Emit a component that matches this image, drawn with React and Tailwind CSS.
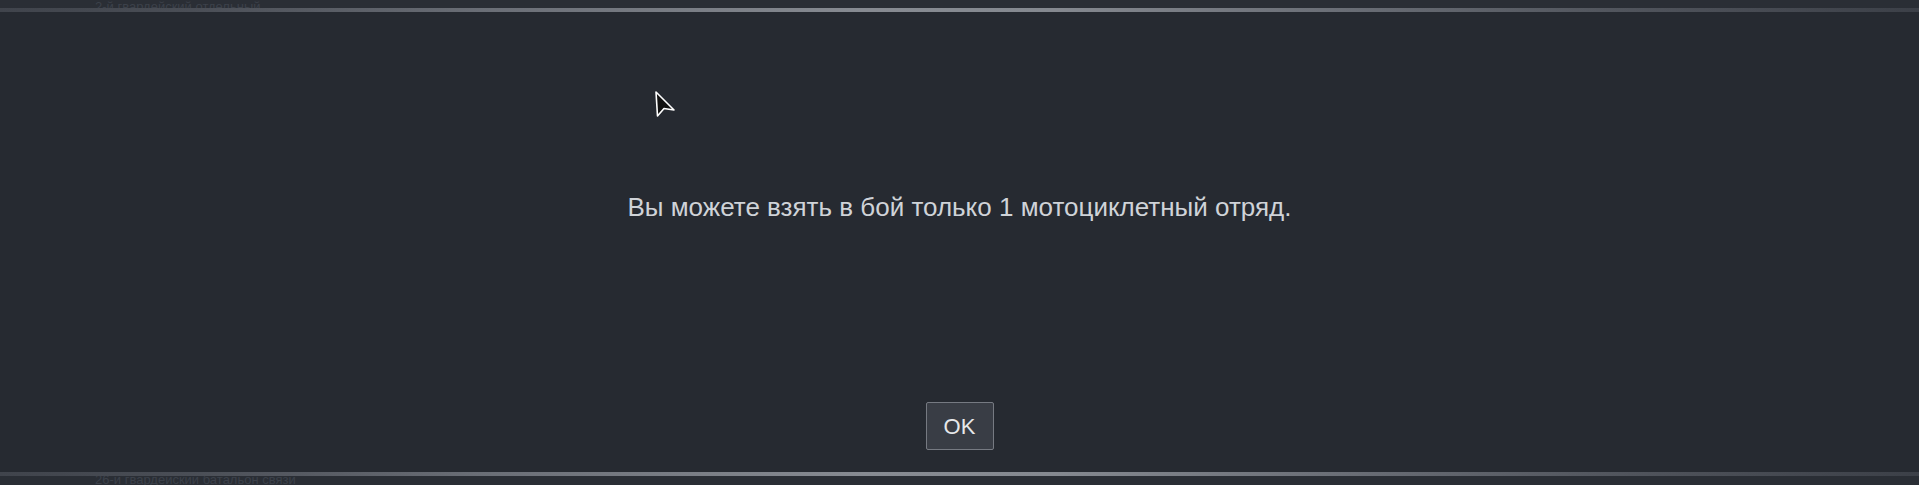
export default function App() {
  return (
    <div className="relative flex h-[485px] w-full flex-col overflow-hidden bg-[#262a31] font-['Liberation_Sans',sans-serif]">
      {/* полоса сверху с остатками списка */}
      <div className="flex h-[8px] items-end overflow-hidden bg-[#2a2e35] pl-[95px] text-[13px] leading-none text-[#3c414a]">
        <span className="translate-y-[5px]">2-й гвардейский отдельный</span>
      </div>
      <div className="h-[4px] bg-[linear-gradient(90deg,#40444c_0%,#4a4e56_10%,#6a6e76_25%,#878b92_45%,#858990_55%,#6a6e76_70%,#50545c_85%,#3c4048_100%)]" />

      {/* окно сообщения */}
      <main className="flex flex-1 flex-col items-center">
        <p className="mt-[180px] text-[26px] leading-[30px] text-[#cfd3d8]">
          Вы можете взять в бой только 1 мотоциклетный отряд.
        </p>
        <button className="mt-auto mb-[22px] h-[48px] w-[68px] rounded-[2px] border border-[#767a82] bg-[#393d45] text-[22px] text-[#e6e8ea]">
          OK
        </button>
      </main>

      <div className="h-[4px] bg-[linear-gradient(90deg,#40444c_0%,#4a4e56_10%,#6a6e76_25%,#878b92_45%,#858990_55%,#6a6e76_70%,#50545c_85%,#3c4048_100%)]" />
      <div className="flex h-[9px] items-start overflow-hidden bg-[#2a2e35] pl-[95px] text-[13px] leading-none text-[#3c414a]">
        <span className="-translate-y-[3px]">26-й гвардейский батальон связи</span>
      </div>

      {/* курсор мыши */}
      <svg className="absolute left-[654px] top-[90px]" width="24" height="30" viewBox="0 0 24 30">
        <path d="M2 2 L3.5 26 L10 18.5 L20 20 Z" fill="#111" stroke="#fff" strokeWidth="1.6" strokeLinejoin="round" />
      </svg>
    </div>
  );
}
